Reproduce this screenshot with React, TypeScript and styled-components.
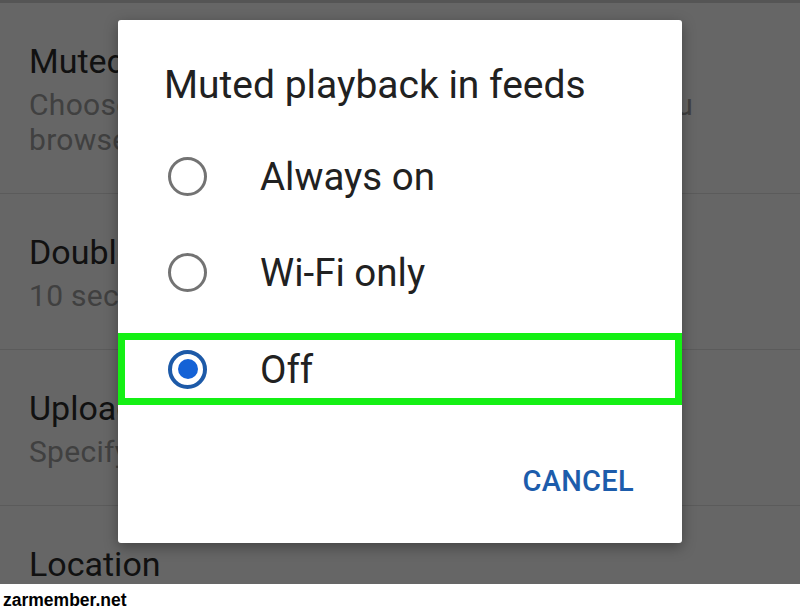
import styled, { createGlobalStyle } from 'styled-components';

const GlobalStyle = createGlobalStyle`
  html, body {
    margin: 0;
    padding: 0;
    background: #fff;
    overflow: hidden;
  }
  body {
    font-family: Roboto, 'Noto Sans', sans-serif;
  }
`;

const Page = styled.div`
  width: 800px;
  height: 613px;
  display: flex;
  flex-direction: column;
`;

const Screen = styled.div`
  position: relative;
  height: 584px;
  flex: none;
  box-sizing: border-box;
  background: #666666;
  border-top: 3px solid #555555;
  overflow: hidden;
`;

const SettingItem = styled.div`
  padding: 38px 29px 36px;
  border-bottom: 1px solid #5b5b5b;
`;

const ItemTitle = styled.div`
  font-size: 34px;
  line-height: 40px;
  color: #111111;
  white-space: nowrap;
`;

const ItemSub = styled.div<{ $first?: boolean }>`
  margin-top: ${(p) => (p.$first ? '6px' : '0')};
  font-size: 30px;
  line-height: 35px;
  letter-spacing: 0.3px;
  color: #404040;
  white-space: nowrap;
`;

const Dialog = styled.div`
  position: absolute;
  left: 118px;
  top: 17px;
  width: 564px;
  height: 523px;
  box-sizing: border-box;
  padding-top: 43px;
  display: flex;
  flex-direction: column;
  background: #ffffff;
  border-radius: 3px;
  box-shadow: 0 4px 14px rgba(0, 0, 0, 0.35);
`;

const DialogTitle = styled.h2`
  margin: 0;
  padding-left: 46px;
  font-size: 39px;
  font-weight: 400;
  line-height: 44px;
  color: #212121;
  white-space: nowrap;
`;

const Options = styled.div`
  margin-top: 21px;
  display: flex;
  flex-direction: column;
`;

const Option = styled.div<{ $highlighted?: boolean }>`
  display: flex;
  align-items: center;
  box-sizing: border-box;
  height: ${(p) => (p.$highlighted ? '72px' : '96px')};
  margin: ${(p) => (p.$highlighted ? '13px 0 11px' : '0')};
  padding-left: ${(p) => (p.$highlighted ? '43px' : '50px')};
  border: ${(p) => (p.$highlighted ? '7px solid #14f014' : 'none')};
`;

const Radio = styled.span<{ $checked?: boolean }>`
  flex: none;
  width: 39px;
  height: 39px;
  box-sizing: border-box;
  border-radius: 50%;
  display: flex;
  align-items: center;
  justify-content: center;
  border: ${(p) => (p.$checked ? '4.5px solid #1d5aa8' : '3.5px solid #737373')};

  &::after {
    content: '';
    display: ${(p) => (p.$checked ? 'block' : 'none')};
    width: 20px;
    height: 20px;
    border-radius: 50%;
    background: #1462d6;
  }
`;

const OptionLabel = styled.span`
  margin-left: 53px;
  font-size: 38.5px;
  color: #212121;
`;

const Footer = styled.div`
  flex: 1;
  display: flex;
  justify-content: flex-end;
  align-items: center;
  padding: 3px 48px 0 0;
`;

const CancelButton = styled.button`
  border: none;
  background: none;
  padding: 0;
  font-family: Roboto, sans-serif;
  font-size: 29px;
  font-weight: 500;
  letter-spacing: 0.3px;
  color: #1c5cab;
`;

const Watermark = styled.div`
  height: 29px;
  box-sizing: border-box;
  padding: 4px 0 0 3px;
  background: #ffffff;
  font-family: 'Liberation Sans', Arial, sans-serif;
  font-size: 17.5px;
  font-weight: 700;
  line-height: 25px;
  color: #000000;
`;

const options = [
  { label: 'Always on', checked: false },
  { label: 'Wi-Fi only', checked: false },
  { label: 'Off', checked: true },
];

const App = () => (
  <>
    <GlobalStyle />
    <Page>
      <Screen>
        <SettingItem>
          <ItemTitle>Muted playback in feeds</ItemTitle>
          <ItemSub $first>Choose whether videos will play muted while you</ItemSub>
          <ItemSub>browse your feeds</ItemSub>
        </SettingItem>
        <SettingItem>
          <ItemTitle>Double-tap to seek</ItemTitle>
          <ItemSub $first>10 seconds</ItemSub>
        </SettingItem>
        <SettingItem>
          <ItemTitle>Uploads</ItemTitle>
          <ItemSub $first>Specify network preferences for uploads</ItemSub>
        </SettingItem>
        <SettingItem>
          <ItemTitle>Location</ItemTitle>
        </SettingItem>

        <Dialog>
          <DialogTitle>Muted playback in feeds</DialogTitle>
          <Options>
            {options.map((o) => (
              <Option key={o.label} $highlighted={o.checked}>
                <Radio $checked={o.checked} />
                <OptionLabel>{o.label}</OptionLabel>
              </Option>
            ))}
          </Options>
          <Footer>
            <CancelButton>CANCEL</CancelButton>
          </Footer>
        </Dialog>
      </Screen>
      <Watermark>zarmember.net</Watermark>
    </Page>
  </>
);

export default App;
